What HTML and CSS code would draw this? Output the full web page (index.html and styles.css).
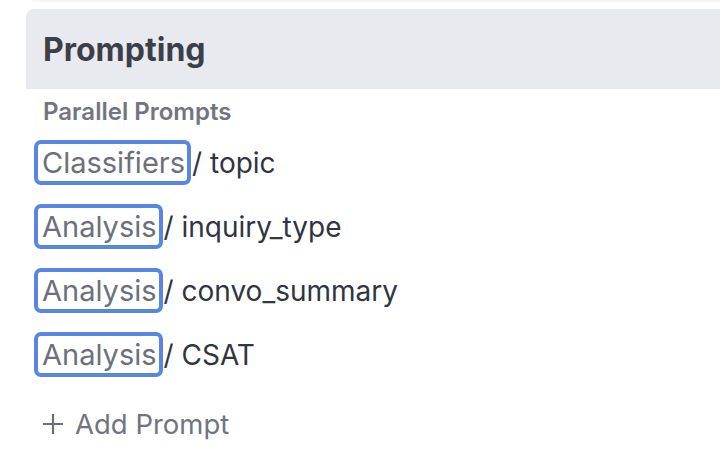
FILE: index.html
```html
<!DOCTYPE html>
<html>
<head>
<meta charset="utf-8">
<link rel="stylesheet" href="styles.css">
</head>
<body>
<div class="panel">
  <div class="topstrip"></div>
  <div class="header"><h1 class="title">Prompting</h1></div>
  <div class="section">
    <div class="label">Parallel Prompts</div>
    <ul class="list">
      <li class="row"><span class="tag">Classifiers</span><span class="name">/ topic</span></li>
      <li class="row"><span class="tag">Analysis</span><span class="name">/ inquiry_type</span></li>
      <li class="row"><span class="tag">Analysis</span><span class="name">/ convo_summary</span></li>
      <li class="row"><span class="tag">Analysis</span><span class="name">/ CSAT</span></li>
    </ul>
    <div class="add"><svg class="plus" width="20" height="20" viewBox="0 0 20 20"><path d="M10 0V20M0 10H20" stroke="#6c6f79" stroke-width="2.2" fill="none"/></svg>Add Prompt</div>
  </div>
</div>
</body>
</html>
```
FILE: styles.css
```css
html, body {
  margin: 0;
  padding: 0;
  background: #ffffff;
  font-family: Inter, "Noto Sans", sans-serif;
  width: 720px;
  height: 470px;
  overflow: hidden;
}
.panel {
  padding-left: 26px;
}
.topstrip {
  height: 2px;
  margin-left: 6px;
  background: #f6f6f8;
  border-radius: 0 0 0 6px;
}
.header {
  margin-top: 7px;
  height: 80px;
  background: #e9eaf0;
  border-top-left-radius: 8px;
  display: flex;
  align-items: center;
  padding-left: 17px;
}
.title {
  margin: 0;
  font-size: 32px;
  font-weight: 700;
  color: #3b3f4a;
  line-height: 40px;
  padding-top: 2px;
}
.section {
  padding-left: 8px;
}
.label {
  margin-top: 9px;
  padding-left: 9px;
  font-size: 24px;
  font-weight: 600;
  color: #72757f;
  line-height: 28px;
}
.list {
  list-style: none;
  margin: 14px 0 0 0;
  padding: 0;
  display: flex;
  flex-direction: column;
  gap: 19px;
}
.row {
  display: flex;
  align-items: center;
  height: 45px;
  font-size: 29px;
}
.tag {
  box-sizing: border-box;
  height: 45px;
  display: flex;
  align-items: center;
  padding: 0 2px 0 4px;
  border: 4px solid #5886e2;
  border-radius: 7px;
  color: #6c707c;
}
.name {
  margin-left: 1px;
  font-size: 28px;
  color: #2f3541;
}
.add {
  margin-top: 29px;
  padding-left: 9px;
  font-size: 27.5px;
  color: #71747f;
  display: flex;
  align-items: center;
  height: 36px;
}
.plus {
  margin-right: 12px;
  flex: none;
}
```
